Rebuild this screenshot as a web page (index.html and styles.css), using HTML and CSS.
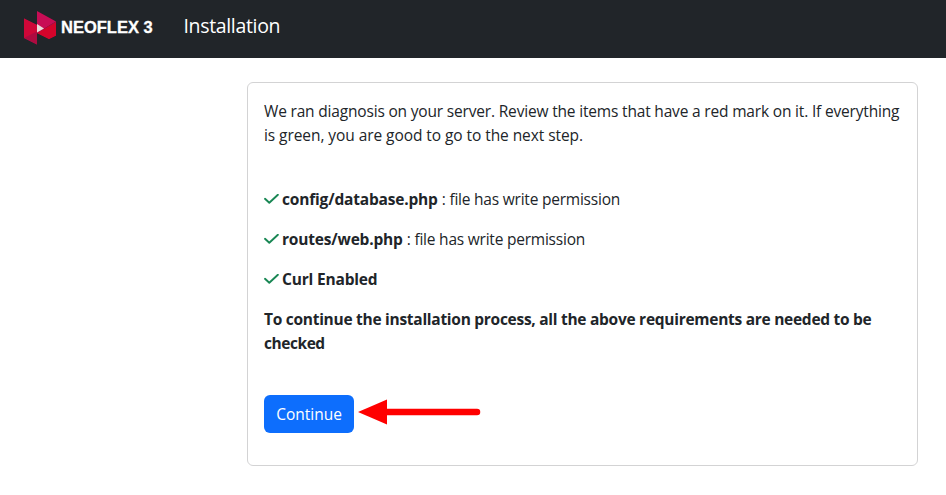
FILE: index.html
```html
<!DOCTYPE html>
<html lang="en">
<head>
<meta charset="utf-8">
<title>Installation</title>
<link rel="stylesheet" href="styles.css">
</head>
<body>
<header class="navbar">
  <div class="brand">
    <svg class="logo" width="32" height="34" viewBox="0 0 32 34" aria-hidden="true">
      <path fill="#bd0c4c" d="M0 7.500 13 14v19.500L0 27z"/>
      <path fill="#cf0738" d="M0 7.500 13 14v7L0 27z"/>
      <path fill="#ad0b40" d="M0 27 13 20.500v13z"/>
      <path fill="#b80c42" d="M32 10.500v14L25 28 13 22z"/>
      <path fill="#c80d55" d="M13 0 32 10.500 13 22z"/>
      <path fill="#d4042b" d="M13 22 32 11.500v13L25 28z"/>
      <path fill="#eadbd9" d="m13 13 7 4.500-7 4z"/>
    </svg>
    <span class="wordmark">NEOFLEX 3</span>
  </div>
  <span class="title">Installation</span>
</header>
<main class="card">
  <p class="intro"><span class="intro-a">We ran diagnosis on your server. Review the items that have a red mark on it. If everything</span><br><span class="intro-b">is green, you are good to go to the next step.</span></p>
  <ul class="checks">
    <li><svg class="check" width="15" height="10" viewBox="0 0 15 10"><path d="m1 4.800 4.300 4L13.900.8"/></svg><b class="name">config/database.php</b><span class="state">: file has write permission</span></li>
    <li><svg class="check" width="15" height="10" viewBox="0 0 15 10"><path d="m1 4.800 4.300 4L13.900.8"/></svg><b class="name">routes/web.php</b><span class="state">: file has write permission</span></li>
    <li><svg class="check" width="15" height="10" viewBox="0 0 15 10"><path d="m1 4.800 4.300 4L13.900.8"/></svg><b class="name">Curl Enabled</b></li>
  </ul>
  <p class="notice"><span class="notice-a">To continue the installation process, all the above requirements are needed to be</span><br><span class="notice-b">checked</span></p>
  <div class="actions">
    <button class="continue" type="button">Continue</button>
    <svg class="arrow" width="124" height="26" viewBox="0 0 124 26" aria-hidden="true"><path fill="#f00" d="M0 13 29 .5v25z"/><path stroke="#f00" stroke-width="6.500" stroke-linecap="round" d="M28 13h91"/></svg>
  </div>
</main>
</body>
</html>
```
FILE: styles.css
```css
* { box-sizing: border-box; }
body {
  margin: 0;
  background: #fff;
  color: #212529;
  font: 15.5px/24px "Segoe UI", "Open Sans", sans-serif;
}
p { margin: 0; white-space: nowrap; }
.navbar {
  display: flex;
  align-items: center;
  height: 58px;
  padding: 0 24px;
  background: #212529;
  color: #fff;
}
.brand { display: flex; align-items: center; gap: 5px; width: 159.500px; padding-bottom: 3px; }
.logo { margin-top: 1px; }
.wordmark { font: bold 16.500px/24px "Liberation Sans", sans-serif; white-space: nowrap; padding-bottom: 1px; -webkit-text-stroke: .3px #fff; }
.title { font-size: 19.500px; line-height: 30px; padding-bottom: 7px; letter-spacing: -.34px; }
.card {
  width: 671px;
  height: 384px;
  margin: 24px 0 0 247px;
  padding: 16px;
  border: 1px solid #d3d3d4;
  border-radius: 6px;
}
.intro-a { letter-spacing: -.178px; }
.intro-b { letter-spacing: -.07px; }
.checks { list-style: none; margin: 40px 0 16px; padding: 0; display: grid; gap: 16px; }
.checks li { display: flex; align-items: center; height: 24px; white-space: nowrap; }
.check { margin-right: 3px; fill: none; stroke: #198754; stroke-width: 1.900; stroke-linecap: round; stroke-linejoin: round; }
.name { letter-spacing: -.18px; }
.state { margin-left: 4px; letter-spacing: -.22px; }
.notice { font-weight: bold; }
.notice-a { letter-spacing: -.275px; }
.notice-b { letter-spacing: -.45px; }
.actions { display: flex; align-items: center; gap: 4px; margin-top: 40px; }
.continue {
  width: 90px;
  height: 38px;
  padding: 0;
  border: 0;
  border-radius: 6px;
  background: #0d6efd;
  color: #fff;
  font: inherit;
}
.arrow { margin-bottom: 5px; }
```
